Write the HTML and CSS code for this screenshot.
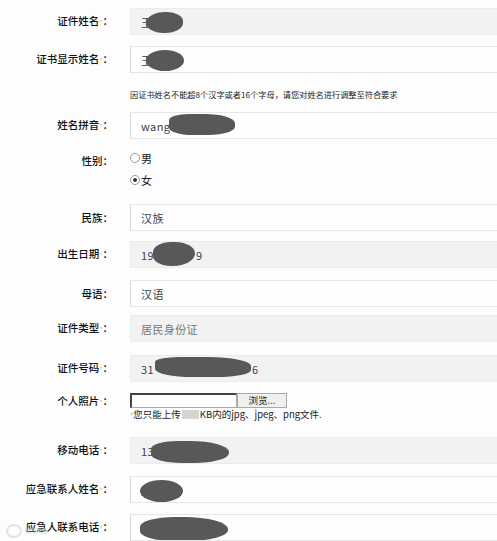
FILE: index.html
```html
<!DOCTYPE html>
<html lang="zh-CN">
<head>
    <meta charset="UTF-8">
    <meta name="viewport" content="width=device-width, initial-scale=1.0">
    <title>个人信息</title>
    <link rel="stylesheet" href="styles.css">
</head>
<body>
    <div class="form">
        <div class="row gap-11">
            <div class="label">证件姓名<i>*</i>：</div>
            <div class="field gray"><span class="val">王</span><span class="blot b-name1"></span></div>
        </div>
        <div class="row">
            <div class="label">证书显示姓名<i>*</i>：</div>
            <div class="field"><span class="val">王</span><span class="blot b-name2"></span></div>
        </div>
        <div class="hint-row">
            <div></div>
            <div class="hint">因证书姓名不能超8个汉字或者16个字母，请您对姓名进行调整至符合要求</div>
        </div>
        <div class="row">
            <div class="label">姓名拼音<i>*</i>：</div>
            <div class="field"><span class="val">wang</span><span class="blot b-pinyin"></span></div>
        </div>
        <div class="row gender">
            <div class="label">性别：</div>
            <div class="radios">
                <div class="radio"><span class="dot"></span>男</div>
                <div class="radio"><span class="dot on"></span>女</div>
            </div>
        </div>
        <div class="row gap-10">
            <div class="label">民族：</div>
            <div class="field"><span class="val">汉族</span></div>
        </div>
        <div class="row gap-12">
            <div class="label">出生日期<i>*</i>：</div>
            <div class="field gray"><span class="val">19<span class="tail-9">9</span></span><span class="blot b-date"></span></div>
        </div>
        <div class="row gap-8">
            <div class="label">母语：</div>
            <div class="field"><span class="val">汉语</span></div>
        </div>
        <div class="row gap-13">
            <div class="label">证件类型<i>*</i>：</div>
            <div class="field gray"><span class="val muted">居民身份证</span></div>
        </div>
        <div class="row">
            <div class="label">证件号码<i>*</i>：</div>
            <div class="field gray"><span class="val">31<span class="tail-6">6</span></span><span class="blot b-id"></span></div>
        </div>
        <div class="row photo">
            <div class="label">个人照片<i>*</i>：</div>
            <div class="upload">
                <div class="file-line">
                    <span class="file-box"></span><span class="browse">浏览...</span>
                </div>
                <div class="upload-tip"><i>*</i>您只能上传<span class="mask"></span>KB内的jpg、jpeg、png文件.</div>
            </div>
        </div>
        <div class="row gap-12">
            <div class="label">移动电话<i>*</i>：</div>
            <div class="field gray"><span class="val">13</span><span class="blot b-phone"></span></div>
        </div>
        <div class="row gap-11">
            <div class="label">应急联系人姓名<i>*</i>：</div>
            <div class="field"><span class="val">王</span><span class="blot b-contact"></span></div>
        </div>
        <div class="row">
            <div class="label">应急人联系电话<i>*</i>：</div>
            <div class="field"><span class="val">1</span><span class="blot b-cphone"></span></div>
        </div>
    </div>
    <div class="watermark"><span class="wb-logo"></span><span class="wb-bar"></span></div>
</body>
</html>
```

FILE: styles.css
```css
body {
    margin: 0;
    padding: 0;
    background: #fdfdfd;
    overflow: hidden;
    font-family: "Noto Sans CJK SC", "Liberation Sans", sans-serif;
    color: #222;
}
.form {
    padding-top: 8px;
}
.row {
    display: grid;
    grid-template-columns: 130px 1fr;
    align-items: center;
}
.gap-8 { margin-bottom: 8px; }
.gap-10 { margin-bottom: 10px; }
.gap-11 { margin-bottom: 11px; }
.gap-12 { margin-bottom: 12px; }
.gap-13 { margin-bottom: 13px; }

.label {
    text-align: right;
    padding-right: 17px;
    font-size: 10.5px;
    line-height: 14px;
    font-weight: 500;
    color: #111;
    white-space: nowrap;
}
.label i {
    font-style: normal;
    font-weight: 400;
    color: #bbb;
    font-size: 7px;
}

.field {
    position: relative;
    height: 25px;
    margin-right: -4px;
    background: #fefefe;
    border: 1px solid #e6e6e6;
    border-left-color: #d8d8d8;
    display: flex;
    align-items: center;
    overflow: hidden;
}
.field.gray {
    background: #f2f2f2;
    border-color: #ececec;
}
.val {
    padding-left: 10px;
    font-size: 11px;
    color: #444;
    letter-spacing: 0.4px;
}
.val.muted {
    color: #777;
}
.tail-9 { margin-left: 42px; }
.tail-6 { margin-left: 98px; }

.blot {
    position: absolute;
    background: #585858;
    border-radius: 50%;
    filter: blur(0.6px);
}
.b-name1 { left: 15px; top: 3px; width: 37px; height: 21px; border-radius: 55% 45% 50% 50%; }
.b-name2 { left: 15px; top: 3px; width: 38px; height: 21px; }
.b-pinyin { left: 38px; top: 1px; width: 66px; height: 21px; border-radius: 30% 45% 40% 35%; }
.b-date { left: 22px; top: 0; width: 42px; height: 24px; border-radius: 45% 50% 55% 45%; }
.b-id { left: 24px; top: 1px; width: 96px; height: 20px; border-radius: 25% 45% 35% 40%; }
.b-phone { left: 20px; top: 3px; width: 78px; height: 22px; border-radius: 35% 50% 45% 40%; }
.b-contact { left: 9px; top: 3px; width: 43px; height: 22px; }
.b-cphone { left: 9px; top: 2px; width: 88px; height: 24px; border-radius: 40% 50% 45% 40%; }

.hint-row {
    display: grid;
    grid-template-columns: 130px 1fr;
    height: 39px;
    align-items: center;
}
.hint {
    font-size: 8.2px;
    color: #222;
    white-space: nowrap;
    padding-top: 2px;
}

.gender {
    align-items: start;
    padding: 8px 0 13px;
}
.gender .label {
    padding-top: 7px;
}
.radios {
    display: flex;
    flex-direction: column;
}
.radio {
    height: 22px;
    display: flex;
    align-items: center;
    font-size: 11px;
    color: #222;
}
.dot {
    width: 8px;
    height: 8px;
    border: 1px solid #999;
    border-radius: 50%;
    margin-right: 1px;
    background: #fff;
    position: relative;
}
.dot.on::after {
    content: "";
    position: absolute;
    left: 2px;
    top: 2px;
    width: 4px;
    height: 4px;
    border-radius: 50%;
    background: #333;
}

.photo {
    align-items: start;
    padding: 11px 0 16px;
}
.photo .label {
    padding-top: 1px;
}
.file-line {
    display: flex;
    height: 15px;
}
.file-box {
    width: 104px;
    height: 12px;
    border: 1px solid #aaa;
    border-top: 2px solid #444;
    border-left: 2px solid #444;
    background: #fff;
}
.browse {
    width: 48px;
    height: 13px;
    border: 1px solid #aaa;
    background: #f0f0f0;
    font-size: 9.5px;
    line-height: 13px;
    text-align: center;
    color: #222;
}
.upload-tip {
    font-size: 9.5px;
    color: #222;
    line-height: 12px;
    white-space: nowrap;
}
.upload-tip i {
    font-style: normal;
    color: #aaa;
    font-size: 7px;
}
.mask {
    display: inline-block;
    width: 17px;
    height: 9px;
    background: #d4d4d4;
    vertical-align: -1px;
    margin: 0 1px;
}

.watermark {
    position: absolute;
    left: 6px;
    bottom: 3px;
    display: flex;
    align-items: center;
    gap: 3px;
    opacity: 0.3;
}
.wb-logo {
    width: 12px;
    height: 10px;
    border: 2px solid #aaa;
    border-radius: 50%;
}
.wb-bar {
    width: 22px;
    height: 6px;
    background: #ccc;
}
```
